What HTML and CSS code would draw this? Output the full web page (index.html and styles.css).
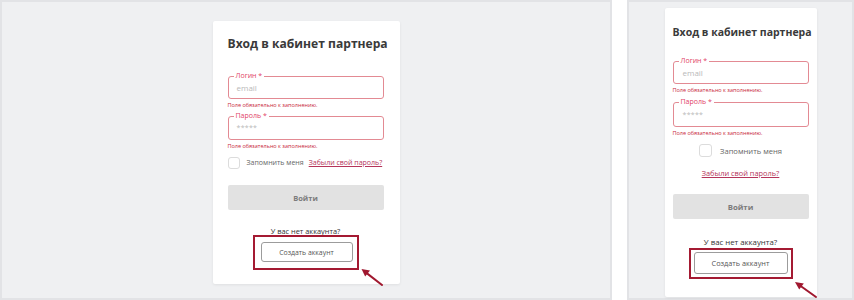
FILE: index.html
```html
<!DOCTYPE html>
<html lang="ru">
<head>
<meta charset="utf-8">
<title>Вход в кабинет партнера</title>
<link rel="stylesheet" href="styles.css">
</head>
<body>
<div class="screens">
  <section class="panel panel--desktop">
    <div class="card card--desktop">
      <h1 class="card__title">Вход в кабинет партнера</h1>
      <div class="field field--login">
        <div class="field__box"><span class="field__label">Логин *</span><span class="field__placeholder">email</span></div>
        <div class="field__error">Поле обязательно к заполнению.</div>
      </div>
      <div class="field field--pass">
        <div class="field__box"><span class="field__label">Пароль *</span><span class="field__placeholder field__placeholder--stars">*****</span></div>
        <div class="field__error">Поле обязательно к заполнению.</div>
      </div>
      <div class="remember">
        <span class="checkbox"></span>
        <span class="remember__text">Запомнить меня</span>
        <a class="forgot">Забыли свой пароль?</a>
      </div>
      <div class="btn-login">Войти</div>
      <div class="signup__text">У вас нет аккаунта?</div>
      <div class="highlight">
        <div class="btn-create">Создать аккаунт</div>
        <svg class="arrow" width="26" height="20" viewBox="0 0 26 20"><path d="M23 19 L8 7.4" stroke="#a0182f" stroke-width="2" stroke-linecap="round"/><path d="M2.5 3 L11 4.6 L6.2 10.6 Z" fill="#a0182f"/></svg>
      </div>
    </div>
  </section>
  <section class="panel panel--mobile">
    <div class="card card--mobile">
      <h1 class="card__title">Вход в кабинет партнера</h1>
      <div class="field field--login">
        <div class="field__box"><span class="field__label">Логин *</span><span class="field__placeholder">email</span></div>
        <div class="field__error">Поле обязательно к заполнению.</div>
      </div>
      <div class="field field--pass">
        <div class="field__box"><span class="field__label">Пароль *</span><span class="field__placeholder field__placeholder--stars">*****</span></div>
        <div class="field__error">Поле обязательно к заполнению.</div>
      </div>
      <div class="remember">
        <span class="checkbox"></span>
        <span class="remember__text">Запомнить меня</span>
      </div>
      <a class="forgot forgot--block">Забыли свой пароль?</a>
      <div class="btn-login">Войти</div>
      <div class="signup__text">У вас нет аккаунта?</div>
      <div class="highlight">
        <div class="btn-create">Создать аккаунт</div>
        <svg class="arrow" width="26" height="20" viewBox="0 0 26 20"><path d="M23 18 L8 7.2" stroke="#a0182f" stroke-width="2" stroke-linecap="round"/><path d="M2 3 L10.8 4.4 L6.2 10.4 Z" fill="#a0182f"/></svg>
      </div>
    </div>
  </section>
</div>
</body>
</html>
```

FILE: styles.css
```css
* { box-sizing: border-box; }
html, body { margin: 0; padding: 0; background: #fff; }
body { font-family: "Open Sans", "Liberation Sans", sans-serif; color: #333; }

.screens {
  display: flex;
  gap: 15px;
  height: 300px;
  width: 854px;
}

.panel {
  background: #eff0f2;
  border: 2px solid #e2e3e6;
  height: 300px;
  display: flex;
  justify-content: center;
  align-items: flex-start;
}
.panel--desktop { width: 612px; padding-top: 19px; }
.panel--mobile { width: 227px; padding-top: 6px; }

.card {
  background: #fff;
  box-shadow: 0 1px 3px rgba(0, 0, 0, 0.07);
  border-radius: 2px;
  display: flex;
  flex-direction: column;
}
.card--desktop { width: 187px; padding: 14px 16px 14px 15px; }
.card--mobile { width: 152px; padding: 16px 8px 18px 8px; }

.card__title {
  margin: 0;
  font-weight: 700;
  color: #3a3a3a;
  white-space: nowrap;
}
.card--desktop .card__title { font-size: 12.1px; line-height: 18px; }
.card--mobile .card__title { font-size: 10.5px; line-height: 16px; }

.field__box {
  position: relative;
  border: 1px solid #e38a93;
  border-radius: 3px;
  display: flex;
  align-items: center;
}
.card--desktop .field--login { margin-top: 23px; }
.card--desktop .field--pass { margin-top: 7px; }
.card--desktop .field__box { height: 23px; padding-left: 8px; }
.card--desktop .field--pass .field__box { height: 24px; }
.card--mobile .field--login { margin-top: 21px; }
.card--mobile .field--pass { margin-top: 8px; }
.card--mobile .field__box { height: 23px; padding-left: 9px; }
.card--mobile .field--pass .field__box { height: 25px; }

.field__label {
  position: absolute;
  top: -5px;
  left: 5px;
  padding: 0 2px;
  background: #fff;
  color: #df3f66;
  font-size: 7px;
  line-height: 8px;
  white-space: nowrap;
}
.field__placeholder {
  color: #b9b9b9;
  font-size: 8px;
  line-height: 10px;
}
.field__placeholder--stars { font-size: 7px; letter-spacing: 0.3px; }

.field__error {
  color: #c8283c;
  font-size: 5.5px;
  line-height: 8px;
  margin-top: 2px;
  white-space: nowrap;
}

.remember {
  display: flex;
  align-items: center;
  margin-top: 7px;
}
.card--mobile .remember { justify-content: center; }
.checkbox {
  width: 12px;
  height: 12px;
  border: 1px solid #dcdcdc;
  border-radius: 3px;
  background: #fff;
  flex: none;
}
.card--mobile .checkbox { width: 13px; height: 13px; }
.remember__text {
  margin-left: 7px;
  color: #666;
  font-size: 7px;
  line-height: 12px;
  white-space: nowrap;
}
.card--mobile .remember__text { margin-left: 8px; font-size: 7.6px; }
.forgot {
  margin-left: 5px;
  color: #b5345a;
  text-decoration: underline;
  font-size: 7px;
  line-height: 12px;
  white-space: nowrap;
}
.forgot--block {
  margin: 11px 0 0 0;
  align-self: center;
  font-size: 7.4px;
  line-height: 10px;
}

.btn-login {
  margin-top: 16px;
  height: 25px;
  background: #e2e2e2;
  border-radius: 2px;
  color: #7b7b7b;
  font-weight: 700;
  font-size: 7.5px;
  display: flex;
  align-items: center;
  justify-content: center;
}
.card--mobile .btn-login { font-size: 7.8px; }

.signup__text {
  align-self: center;
  color: #333;
  font-size: 7.4px;
  line-height: 7px;
  margin-top: 18px;
  white-space: nowrap;
}
.card--mobile .signup__text { font-size: 7.8px; line-height: 8px; margin-top: 19px; }

.highlight {
  position: relative;
  align-self: center;
  border: 2px solid #a41a32;
}
.card--desktop .highlight { padding: 5px 4px 6px 6px; }
.card--mobile .highlight { padding: 2px 3px 3px 3px; margin-top: 2px; }

.btn-create {
  border: 1px solid #9c9c9c;
  border-radius: 3px;
  color: #555;
  font-size: 6.9px;
  display: flex;
  align-items: center;
  justify-content: center;
  white-space: nowrap;
}
.card--desktop .btn-create { width: 92px; height: 20px; }
.card--mobile .btn-create { width: 94px; height: 22px; font-size: 7.3px; }

.arrow {
  position: absolute;
  left: calc(100% + 2px);
}
.card--desktop .arrow { top: calc(100% - 2px); }
.card--mobile .arrow { top: calc(100% + 2px); }
```
